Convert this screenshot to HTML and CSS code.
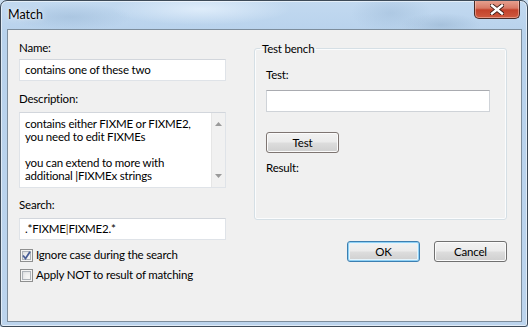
FILE: index.html
```html
<!DOCTYPE html>
<html lang="en">
<head>
  <meta charset="UTF-8" />
  <title>Match</title>
  <link rel="stylesheet" href="styles.css">
</head>
<body>
  <div class="window">
    <!-- Barra de título estilo Aero -->
    <div class="titlebar">
      <span class="title">Match</span>
      <button class="close" title="Close">
        <svg width="14" height="11" viewBox="0 0 14 11">
          <path d="M2 1.5 L12 9.5 M12 1.5 L2 9.5" stroke="#3b1a14" stroke-width="4.2" stroke-linecap="square" fill="none"/>
          <path d="M2 1.5 L12 9.5 M12 1.5 L2 9.5" stroke="#ffffff" stroke-width="2.4" stroke-linecap="square" fill="none"/>
        </svg>
      </button>
    </div>

    <div class="client">
      <!-- Coluna da esquerda: dados da regra -->
      <div class="left">
        <div class="lbl lbl-name">Name:</div>
        <div class="field">contains one of these two</div>

        <div class="lbl lbl-desc">Description:</div>
        <div class="memo">
          <div class="memo-text">
            <div class="memo-line">contains either FIXME or FIXME2,</div>
            <div class="memo-line">you need to edit FIXMEs</div>
            <div class="memo-line"></div>
            <div class="memo-line">you can extend to more with</div>
            <div class="memo-line">additional |FIXMEx strings</div>
          </div>
          <div class="memo-scroll">
            <svg width="7" height="4" viewBox="0 0 7 4"><path d="M0 4 L3.5 0 L7 4 Z" fill="#9a9a9a"/></svg>
            <svg width="7" height="4" viewBox="0 0 7 4"><path d="M0 0 L7 0 L3.5 4 Z" fill="#9a9a9a"/></svg>
          </div>
        </div>

        <div class="lbl lbl-search">Search:</div>
        <div class="field">.*FIXME<span class="pipe">|</span>FIXME2.*</div>

        <label class="check check-first">
          <span class="box">
            <svg width="9" height="9" viewBox="0 0 9 9"><path d="M1 4.5 L3.5 7.5 L8 0.8" stroke="#4a5f97" stroke-width="1.8" fill="none"/></svg>
          </span>
          Ignore case during the search
        </label>
        <label class="check">
          <span class="box"></span>
          Apply NOT to result of matching
        </label>
      </div>

      <!-- Coluna da direita: bancada de teste e botões -->
      <div class="right">
        <fieldset class="bench">
          <legend>Test bench</legend>
          <div class="lbl lbl-test">Test:</div>
          <div class="field field-test"></div>
          <button class="btn btn-test">Test</button>
          <div class="lbl lbl-result">Result:</div>
        </fieldset>

        <div class="actions">
          <button class="btn btn-default">OK</button>
          <button class="btn">Cancel</button>
        </div>
      </div>
    </div>
  </div>
</body>
</html>
```

FILE: styles.css
```css
body {
  margin: 0;
  font-family: Lato, "Liberation Sans", Arial, sans-serif;
  font-size: 11.5px;
  letter-spacing: -0.2px;
  color: #000;
  background: #c8dcef;
}

.window {
  width: 528px;
  height: 327px;
  box-sizing: border-box;
  display: flex;
  flex-direction: column;
  border: 1px solid #3d4a58;
  border-radius: 7px 7px 3px 3px;
  background:
    radial-gradient(ellipse 60px 14px at 70px 16px, rgba(150, 180, 210, 0.45), transparent),
    radial-gradient(ellipse 90px 16px at 200px 8px, rgba(235, 245, 255, 0.7), transparent),
    radial-gradient(ellipse 40px 20px at 390px 12px, rgba(150, 180, 210, 0.4), transparent),
    radial-gradient(ellipse 40px 12px at 440px 24px, rgba(130, 160, 190, 0.35), transparent),
    linear-gradient(to bottom, #c2d9f0 0%, #b8d2ec 10%, #bcd4ed 100%);
  box-shadow: inset 0 0 0 1px rgba(255, 255, 255, 0.55);
  overflow: hidden;
}

.titlebar {
  height: 28px;
  flex-shrink: 0;
  display: flex;
  justify-content: space-between;
  align-items: flex-start;
}

.title {
  padding: 6px 0 0 7px;
  font-size: 12.5px;
  letter-spacing: 0;
  line-height: 16px;
  color: #000;
  text-shadow: 0 0 6px rgba(255, 255, 255, 0.9), 0 0 2px rgba(255, 255, 255, 0.9);
}

.close {
  width: 46px;
  height: 19px;
  margin: -1px 7px 0 0;
  padding: 0;
  display: flex;
  align-items: center;
  justify-content: center;
  border: 1px solid #4a2a24;
  border-top: none;
  border-radius: 0 0 5px 5px;
  background: linear-gradient(to bottom, #e8a594 0%, #d87a66 45%, #c3422b 55%, #cf5a3f 100%);
  box-shadow: inset 0 0 0 1px rgba(255, 220, 210, 0.45);
}

.client {
  flex: 1;
  margin: 0 5px 4px 6px;
  border: 1px solid #7d8d9c;
  background: #f0f0f0;
  display: grid;
  grid-template-columns: 207px 253px;
  column-gap: 28px;
  align-items: start;
  padding-left: 11px;
}

.lbl {
  line-height: 16px;
}

.lbl-name { margin: 10px 0 3px; }
.lbl-desc { margin: 10px 0 5px; }
.lbl-search { margin: 9px 0 5px; }

.field {
  height: 22px;
  box-sizing: border-box;
  padding: 0 5px;
  line-height: 20px;
  background: #fff;
  border: 1px solid #dfe3e8;
  border-top-color: #d2d6dc;
  white-space: nowrap;
}

.pipe {
  color: #7a5212;
}

.memo {
  height: 76px;
  box-sizing: border-box;
  display: flex;
  background: #fff;
  border: 1px solid #dfe3e8;
  border-top-color: #d2d6dc;
}

.memo-text {
  flex: 1;
  padding: 4px 5px 0;
  white-space: nowrap;
  overflow: hidden;
}

.memo-line {
  height: 13px;
  line-height: 13px;
}

.memo-scroll {
  width: 13px;
  display: flex;
  flex-direction: column;
  justify-content: space-between;
  align-items: center;
  padding: 9px 0 9px;
  background: #f1f1f1;
  border-left: 1px solid #e6e6e6;
}

.check {
  display: flex;
  align-items: center;
  gap: 3px;
  height: 16px;
  line-height: 16px;
  margin: 4px 0 0 1px;
}

.check-first {
  margin-top: 7px;
}

.box {
  width: 13px;
  height: 13px;
  box-sizing: border-box;
  flex-shrink: 0;
  display: flex;
  align-items: center;
  justify-content: center;
  border: 1px solid #8e8f8f;
  background: #f4f4f4;
  box-shadow: inset 0 0 0 1px #f4f4f4, inset 0 0 0 2px #aeb3b9, inset 2px 2px 4px #d3d5d8;
}

.bench {
  margin: 11px 0 0;
  padding: 11px 11px 43px;
  border: 1px solid #d5dfe5;
  border-radius: 3px;
  box-shadow: inset 0 0 0 1px #fbfcfd;
}

.bench legend {
  margin-left: -6px;
  padding: 0 2px;
  line-height: 15px;
}

.field-test {
  width: 224px;
  margin-top: 7px;
  border-color: #cfd3d8;
  border-top-color: #a9abb0;
}

.btn {
  height: 21px;
  box-sizing: border-box;
  padding: 0;
  font: inherit;
  letter-spacing: inherit;
  color: #000;
  border: 1px solid #707070;
  border-radius: 3px;
  background: linear-gradient(to bottom, #f2f2f2 0%, #ebebeb 48%, #dddddd 52%, #cfcfcf 100%);
  box-shadow: inset 0 0 0 1px #fbfbfb;
}

.btn-test {
  display: block;
  width: 73px;
  margin-top: 20px;
  border-color: #7e7572;
}

.lbl-result {
  margin-top: 7px;
}

.actions {
  display: flex;
  justify-content: flex-end;
  gap: 14px;
  margin-top: 21px;
}

.actions .btn {
  width: 73px;
}

.btn-default {
  border-color: #3c7fb1;
  box-shadow: inset 0 0 0 1px #8fd0f4, inset 0 0 0 2px #e6f4fb;
}
```
